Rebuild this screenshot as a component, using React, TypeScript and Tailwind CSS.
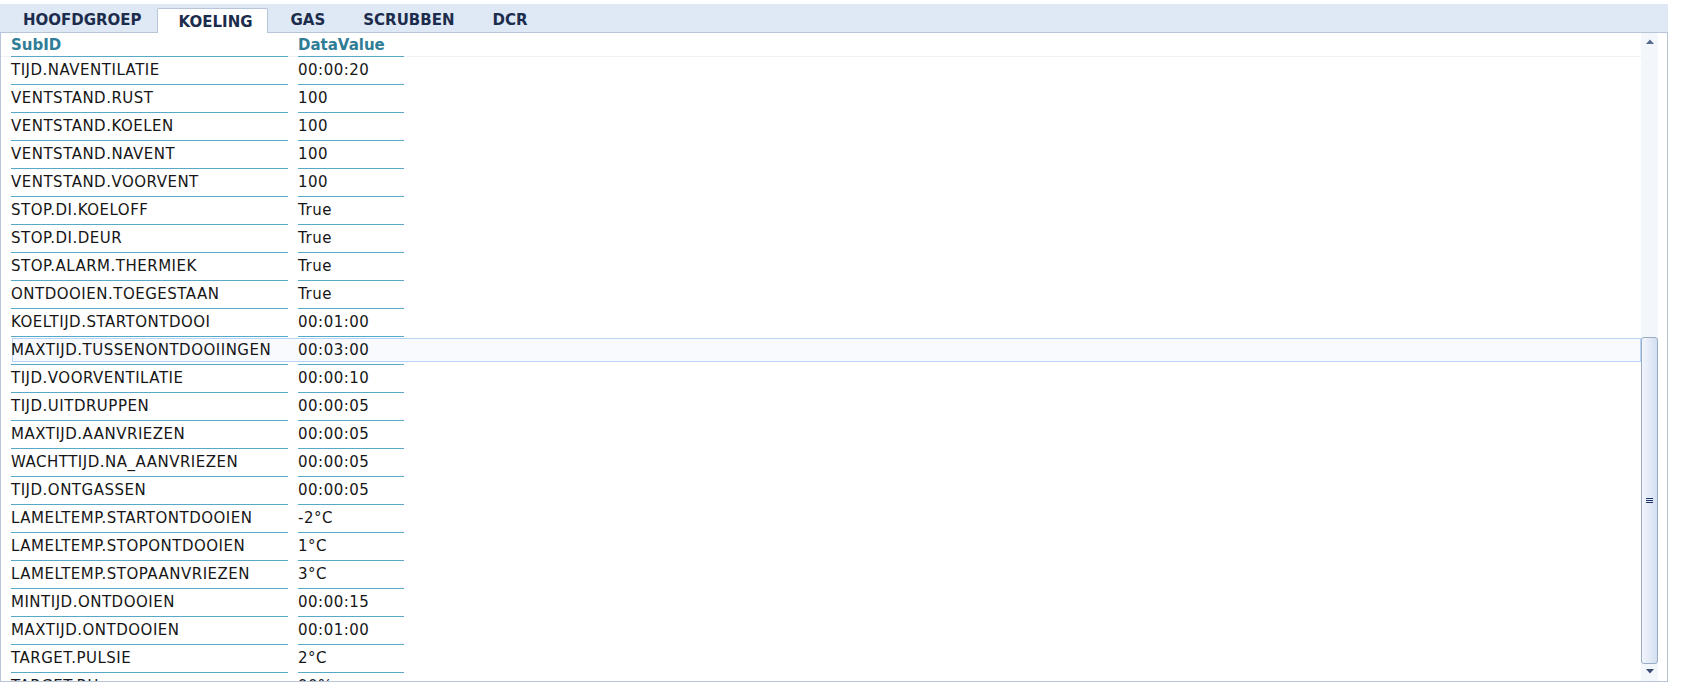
import React from 'react';

type Setting = { subId: string; value: string };

const tabs = ['HOOFDGROEP', 'KOELING', 'GAS', 'SCRUBBEN', 'DCR'];
const activeTab = 'KOELING';

const settings: Setting[] = [
  { subId: 'TIJD.NAVENTILATIE', value: '00:00:20' },
  { subId: 'VENTSTAND.RUST', value: '100' },
  { subId: 'VENTSTAND.KOELEN', value: '100' },
  { subId: 'VENTSTAND.NAVENT', value: '100' },
  { subId: 'VENTSTAND.VOORVENT', value: '100' },
  { subId: 'STOP.DI.KOELOFF', value: 'True' },
  { subId: 'STOP.DI.DEUR', value: 'True' },
  { subId: 'STOP.ALARM.THERMIEK', value: 'True' },
  { subId: 'ONTDOOIEN.TOEGESTAAN', value: 'True' },
  { subId: 'KOELTIJD.STARTONTDOOI', value: '00:01:00' },
  { subId: 'MAXTIJD.TUSSENONTDOOIINGEN', value: '00:03:00' },
  { subId: 'TIJD.VOORVENTILATIE', value: '00:00:10' },
  { subId: 'TIJD.UITDRUPPEN', value: '00:00:05' },
  { subId: 'MAXTIJD.AANVRIEZEN', value: '00:00:05' },
  { subId: 'WACHTTIJD.NA_AANVRIEZEN', value: '00:00:05' },
  { subId: 'TIJD.ONTGASSEN', value: '00:00:05' },
  { subId: 'LAMELTEMP.STARTONTDOOIEN', value: '-2°C' },
  { subId: 'LAMELTEMP.STOPONTDOOIEN', value: '1°C' },
  { subId: 'LAMELTEMP.STOPAANVRIEZEN', value: '3°C' },
  { subId: 'MINTIJD.ONTDOOIEN', value: '00:00:15' },
  { subId: 'MAXTIJD.ONTDOOIEN', value: '00:01:00' },
  { subId: 'TARGET.PULSIE', value: '2°C' },
  { subId: 'TARGET.RH', value: '90%' },
];

const hoveredRow = 'MAXTIJD.TUSSENONTDOOIINGEN';

const Scrollbar: React.FC = () => (
  <div className="flex h-full w-[17px] flex-col bg-[#f3f7fc]">
    <div className="flex h-[17px] items-start justify-center pt-[6px]">
      <svg width="8" height="5" viewBox="0 0 8 5">
        <path d="M0 5 L4 0.5 L8 5 Z" fill="#566b91" />
      </svg>
    </div>
    <div className="h-[287px]" />
    <div className="flex h-[327px] items-center justify-center rounded-[3px] border border-[#9aabc4] bg-gradient-to-r from-[#f2f6fb] via-[#e3ebf7] to-[#d2dff1]">
      <div className="flex flex-col gap-px">
        <span className="block h-px w-[7px] bg-[#1d3562]" />
        <span className="block h-px w-[7px] bg-[#1d3562]" />
        <span className="block h-px w-[7px] bg-[#1d3562]" />
      </div>
    </div>
    <div className="flex h-[17px] items-start justify-center pt-[5px]">
      <svg width="8" height="5" viewBox="0 0 8 5">
        <path d="M0 0 L8 0 L4 4.5 Z" fill="#3a4e74" />
      </svg>
    </div>
  </div>
);

export default function App() {
  return (
    <div className="h-[693px] w-full bg-white pt-[4px] font-['DejaVu_Sans','Liberation_Sans',sans-serif]">
      <div className="w-[1668px]">
        {/* tab strip */}
        <div className="flex h-[28px] items-end bg-[#dfe8f5]">
          {tabs.map((tab) =>
            tab === activeTab ? (
              <div
                key={tab}
                className="relative z-10 -mb-px flex h-[25px] items-center rounded-t-[2px] border border-b-0 border-[#b7c5d9] bg-white pl-[21px] pr-[14px] pt-[2px] text-[15px] font-bold text-[#1c2c4c]"
              >
                {tab}
              </div>
            ) : (
              <div
                key={tab}
                className="flex h-[25px] items-center pl-[23px] pr-[15px] pt-[2px] text-[15px] font-bold text-[#1c2c4c]"
              >
                {tab}
              </div>
            )
          )}
        </div>

        {/* panel */}
        <div className="flex h-[650px] border border-[#b7c5d9] bg-white">
          <div className="h-full flex-1 overflow-hidden text-[15px] tracking-[0.5px] text-[#161616]">
            <div className="flex h-[24px] gap-[10px] pl-[10px] shadow-[inset_0_-1px_0_#eef2f7]">
              <div className="flex w-[277px] items-center border-b border-[#57a9c7] pt-px font-bold tracking-normal text-[#2f7d96]">
                SubID
              </div>
              <div className="flex w-[106px] items-center border-b border-[#57a9c7] pt-px font-bold tracking-normal text-[#2f7d96]">
                DataValue
              </div>
            </div>
            {settings.map((row) => (
              <div key={row.subId} className="relative flex h-[28px] gap-[10px] pl-[10px]">
                {row.subId === hoveredRow && (
                  <div className="absolute left-[11px] right-0 top-[1px] h-[24px] border border-[#b9d5f6] bg-[#f8fafe]" />
                )}
                <div className="relative flex w-[277px] items-center whitespace-nowrap border-b border-[#57a9c7]">
                  {row.subId}
                </div>
                <div className="relative flex w-[106px] items-center whitespace-nowrap border-b border-[#57a9c7]">
                  {row.value}
                </div>
              </div>
            ))}
          </div>
          <Scrollbar />
          <div className="w-[9px]" />
        </div>
      </div>
    </div>
  );
}
